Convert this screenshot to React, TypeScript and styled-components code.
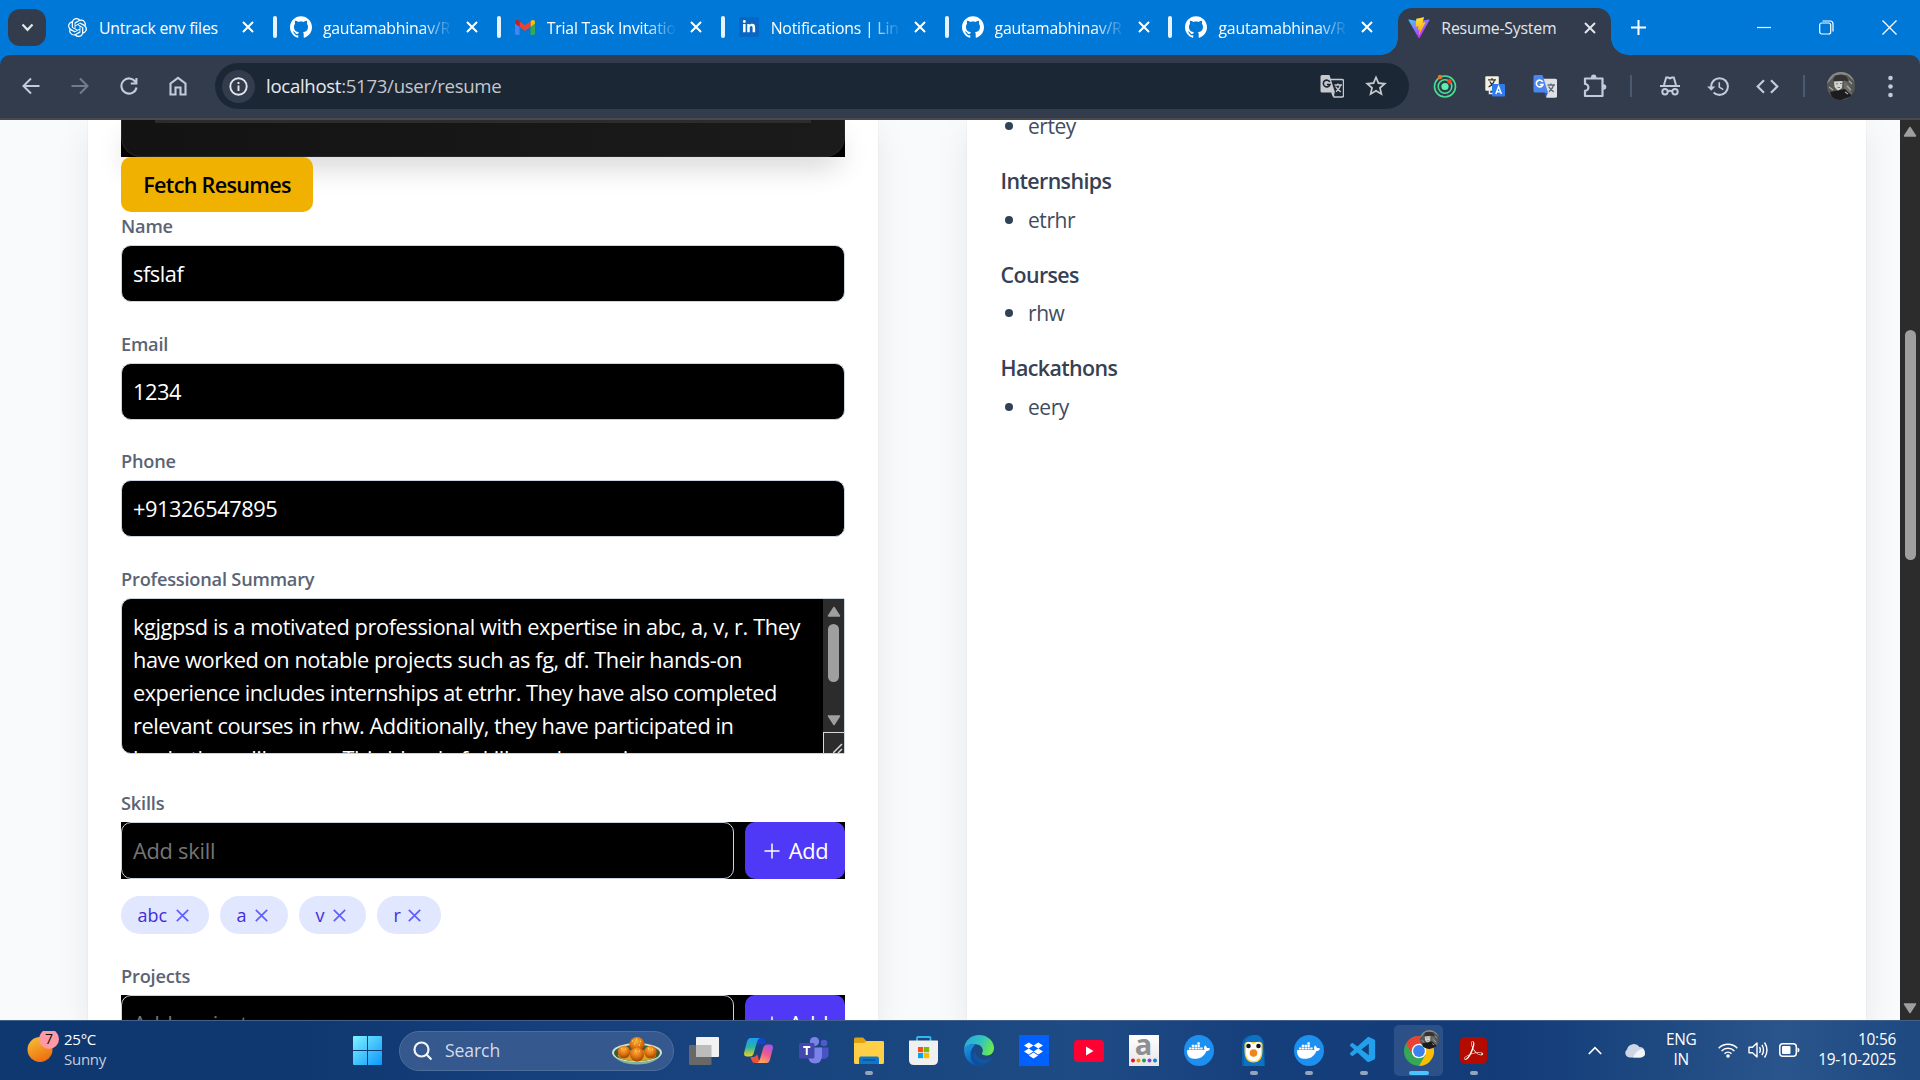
import React from "react";
import styled, { createGlobalStyle, css } from "styled-components";
import { SiOpenai, SiGithub, SiDropbox, SiDocker, SiAdobeacrobatreader } from "react-icons/si";
import { VscVscode } from "react-icons/vsc";
import { FaLinkedinIn } from "react-icons/fa";
import { MdStarBorder, MdHistory } from "react-icons/md";

const GlobalStyle = createGlobalStyle`
  * { box-sizing: border-box; }
  html, body { margin: 0; padding: 0; overflow: hidden; }
  body { font-family: "Segoe UI", "Open Sans", "Noto Sans", sans-serif; }
  svg { display: block; flex: none; }
`;

const Screen = styled.div`
  width: 1920px;
  height: 1080px;
  overflow: hidden;
  display: flex;
  flex-direction: column;
  background: #0078d7;
`;

/* ---------- Tab strip ---------- */
const TabStrip = styled.header`
  height: 55px;
  flex: none;
  display: flex;
  align-items: stretch;
  background: #0078d7;
  color: #fff;
  padding-left: 8px;
`;
const TabSearch = styled.div`
  width: 38px;
  height: 37px;
  margin: 9px 5px 0 0;
  border-radius: 12px;
  background: #323c4d;
  display: grid;
  place-items: center;
`;
const Tab = styled.div<{ $last?: boolean }>`
  width: 223.9px;
  flex: none;
  display: flex;
  align-items: center;
  padding: 0 0 1px 15px;
  position: relative;
  ${(p) =>
    !p.$last &&
    css`
      &::after {
        content: "";
        position: absolute;
        right: -2px;
        top: 16px;
        width: 4px;
        height: 22px;
        border-radius: 2px;
        background: #e9f3fc;
      }
    `}
`;
const TabIcon = styled.div`
  width: 22px;
  display: grid;
  place-items: center;
  margin-right: 11px;
`;
const TabTitle = styled.div<{ $fade?: boolean }>`
  width: 130px;
  white-space: nowrap;
  font-size: 15.8px;
  letter-spacing: -0.2px;
  line-height: 24px;
  padding-top: 1px;
  ${(p) =>
    p.$fade &&
    css`
      mask-image: linear-gradient(90deg, #000 98px, transparent 130px);
    `}
`;
const TabClose = styled.div`
  margin-left: 9px;
  width: 20px;
  display: grid;
  place-items: center;
`;
const ActiveTab = styled.div`
  width: 213px;
  margin: 8px 0 0 4px;
  flex: none;
  display: flex;
  align-items: center;
  padding: 0 0 8px 10px;
  background: #323c4d;
  border-radius: 14px 14px 0 0;
  color: #e3e6ea;
  position: relative;
  &::before,
  &::after {
    content: "";
    position: absolute;
    bottom: 0;
    width: 17px;
    height: 17px;
  }
  &::before {
    left: -17px;
    background: radial-gradient(circle at 0 0, transparent 16.5px, #323c4d 17px);
  }
  &::after {
    right: -17px;
    background: radial-gradient(circle at 100% 0, transparent 16.5px, #323c4d 17px);
  }
`;
const NewTab = styled.div`
  width: 55px;
  display: grid;
  place-items: center;
`;
const WindowButtons = styled.div`
  margin-left: auto;
  display: flex;
  align-items: center;
  padding-bottom: 1px;
  margin-right: -1px;
`;
const WindowButton = styled.div`
  width: 63px;
  display: grid;
  place-items: center;
`;

/* ---------- Toolbar ---------- */
const Toolbar = styled.div`
  height: 65px;
  flex: none;
  display: flex;
  align-items: center;
  background: #323c4d;
  border-bottom: 2px solid #47494b;
  border-radius: 10px 10px 0 0;
  color: #c2cbdc;
  padding-left: 6.5px;
  padding-bottom: 1px;
`;
const NavButton = styled.div<{ $dim?: boolean }>`
  width: 49px;
  display: grid;
  place-items: center;
  opacity: ${(p) => (p.$dim ? 0.45 : 1)};
`;
const Omnibox = styled.div`
  width: 1194px;
  height: 46px;
  margin-left: 12.5px;
  border-radius: 23px;
  background: #1c2736;
  display: flex;
  align-items: center;
  padding: 0 19px 0 7px;
`;
const SiteInfo = styled.div`
  width: 33px;
  height: 33px;
  border-radius: 50%;
  background: #323c4d;
  color: #e3e6ea;
  display: grid;
  place-items: center;
  margin-right: 11px;
`;
const Url = styled.div`
  flex: 1;
  font-size: 18.6px;
  letter-spacing: -0.3px;
  line-height: 26px;
  color: #c4c7cc;
  b {
    font-weight: 400;
    color: #e8eaed;
  }
`;
const OmniIcon = styled.div`
  width: 28px;
  margin-left: 16px;
  display: grid;
  place-items: center;
  color: #c7c9cd;
`;
const Extensions = styled.div`
  display: flex;
  align-items: center;
  margin-left: 11px;
`;
const ExtButton = styled.div<{ $w?: number }>`
  width: ${(p) => p.$w ?? 50}px;
  display: grid;
  place-items: center;
`;
const ToolbarDivider = styled.div`
  width: 2px;
  height: 22px;
  background: #4c5a70;
`;

/* ---------- Page ---------- */
const Page = styled.main`
  height: 900px;
  flex: none;
  display: flex;
  background: #f8fafc;
  overflow: hidden;
`;
const Columns = styled.div`
  flex: 1;
  display: flex;
  gap: 89px;
  padding: 0 34px 0 88px;
  overflow: hidden;
`;
const Card = styled.section<{ $w: number }>`
  width: ${(p) => p.$w}px;
  flex: none;
  background: #fff;
  padding: 0 33px;
  box-shadow: 0 0 0 1px rgba(0, 0, 0, 0.02), 0 12px 32px rgba(0, 0, 0, 0.08);
`;
const DarkBlock = styled.div`
  height: 37px;
  background: #000;
  box-shadow: 0 14px 30px -6px rgba(0, 0, 0, 0.2);
`;
const DarkPanel = styled.div`
  height: 37px;
  padding: 0 33px;
  border: 1px solid #262626;
  border-top: 0;
  border-radius: 0 0 20px 20px;
  background: linear-gradient(90deg, #131313, #1b1b1b);
`;
const DarkRule = styled.div`
  height: 3px;
  background: #2c2c2c;
`;
const FetchButton = styled.div`
  position: relative;
  width: 192px;
  height: 55px;
  border-radius: 10px;
  background: #f0b100;
  color: #000;
  font-size: 21.6px;
  font-weight: 600;
  letter-spacing: -0.7px;
  display: grid;
  place-items: center;
`;
const Field = styled.div<{ $gap: number }>`
  margin-bottom: ${(p) => p.$gap}px;
`;
const Label = styled.div<{ $first?: boolean }>`
  height: ${(p) => (p.$first ? 33 : 34)}px;
  padding-top: ${(p) => (p.$first ? 0 : 1)}px;
  font-size: 18.2px;
  letter-spacing: -0.2px;
  line-height: 28px;
  font-weight: 600;
  color: #5a6474;
`;
const fieldText = css`
  font-size: 21.8px;
  letter-spacing: -0.44px;
  color: #fff;
  white-space: nowrap;
`;
const TextInput = styled.div`
  ${fieldText}
  height: 57px;
  border: 1px solid #cad5e2;
  border-radius: 10px;
  background: #000;
  padding: 0 11px;
  display: flex;
  align-items: center;
`;
const SummaryBox = styled.div`
  height: 156px;
  border: 1px solid #cad5e2;
  border-radius: 10px 2px 2px 10px;
  background: #000;
  display: flex;
  overflow: hidden;
`;
const SummaryText = styled.div`
  ${fieldText}
  flex: 1;
  padding: 11px 0 0 11px;
  line-height: 33px;
  div:nth-child(1) {
    letter-spacing: -0.42px;
  }
  div:nth-child(3) {
    letter-spacing: -0.53px;
  }
  div:nth-child(4) {
    letter-spacing: -0.47px;
  }
`;
const SummaryScroll = styled.div`
  width: 21px;
  display: flex;
  flex-direction: column;
  background: #2c2c2c;
`;
const ScrollCell = styled.div<{ $h: number; $end?: boolean }>`
  height: ${(p) => p.$h}px;
  flex: none;
  display: flex;
  justify-content: center;
  align-items: ${(p) => (p.$end ? "flex-end" : "center")};
  padding-bottom: ${(p) => (p.$end ? 6 : 1)}px;
`;
const ScrollThumb = styled.div<{ $h: number }>`
  width: 11px;
  height: ${(p) => p.$h}px;
  flex: none;
  border-radius: 6px;
  background: #9f9f9f;
  margin: 0 auto;
`;
const Resizer = styled.div`
  height: 21px;
  flex: none;
  margin-top: auto;
  border: solid #d8d8d8;
  border-width: 1px 0 0 1px;
  display: flex;
  align-items: flex-end;
  justify-content: flex-end;
  padding: 0 1px 0 0;
`;
const AddRow = styled.div`
  height: 57px;
  display: flex;
  gap: 11px;
  background: #000;
`;
const AddInput = styled(TextInput)`
  width: 613px;
  letter-spacing: -0.25px;
  color: #757575;
`;
const AddButton = styled.div`
  width: 100px;
  border-radius: 10px;
  background: #4f39f6;
  color: #fff;
  font-size: 21.8px;
  letter-spacing: -0.4px;
  display: flex;
  align-items: center;
  justify-content: center;
  gap: 8px;
  padding-left: 1px;
`;
const Tags = styled.div`
  display: flex;
  gap: 11px;
  padding-top: 17px;
`;
const Tag = styled.div<{ $w: number }>`
  width: ${(p) => p.$w}px;
  height: 38px;
  border-radius: 19px;
  background: #e0e7ff;
  color: #432dd7;
  font-size: 18px;
  display: flex;
  align-items: center;
  justify-content: space-between;
  padding: 0 20px 0 16.5px;
`;
const Section = styled.div`
  height: 93.5px;
`;
const ScrolledSection = styled.div`
  height: 44px;
  margin-top: -11px;
  margin-bottom: 11px;
`;
const SectionTitle = styled.div`
  height: 39px;
  padding-left: 0.5px;
  font-size: 21.4px;
  line-height: 33px;
  font-weight: 600;
  letter-spacing: -0.6px;
  color: #364153;
`;
const Bullet = styled.div`
  display: flex;
  align-items: center;
  padding-left: 5px;
  gap: 15px;
  height: 33px;
  font-size: 21px;
  letter-spacing: -0.45px;
  color: #414c5e;
  &::before {
    content: "";
    width: 8px;
    height: 8px;
    border-radius: 50%;
    background: #314158;
  }
`;
const PageScroll = styled.div`
  width: 20px;
  flex: none;
  background: #2c2c2c;
  display: flex;
  flex-direction: column;
`;

/* ---------- Taskbar ---------- */
const Taskbar = styled.footer`
  height: 60px;
  flex: none;
  display: flex;
  align-items: center;
  border-top: 1px solid #43608a;
  background: linear-gradient(90deg, #103870 0%, #103870 16%, #15407c 28%, #1a4680 46%, #1f4b85 56%, #153f7b 66%, #123b78 78%, #1d4880 86%, #2a558c 93%, #1d4880 100%);
  color: #fff;
  padding-right: 24px;
`;
const Weather = styled.div`
  width: 353px;
  display: flex;
  align-items: center;
  padding-left: 27px;
  gap: 5px;
`;
const WeatherIcon = styled.div`
  width: 32px;
  height: 40px;
`;
const WeatherText = styled.div`
  font-size: 15px;
  letter-spacing: -0.25px;
  line-height: 20px;
  padding-bottom: 3px;
  div + div {
    color: #c3cede;
  }
`;
const SearchBox = styled.div`
  width: 275px;
  height: 40px;
  margin: 0 2px 0 16px;
  border-radius: 20px;
  background: #35588e;
  border: 1px solid #4d6d9d;
  display: flex;
  align-items: center;
  padding: 0 11px 0 13px;
  font-size: 17.6px;
  letter-spacing: -0.1px;
  color: #d3dcea;
`;
const SearchLabel = styled.div`
  flex: 1;
  padding: 0 0 2px 12px;
`;
const TaskItem = styled.div<{ $active?: boolean }>`
  width: 55px;
  height: 59px;
  flex: none;
  display: grid;
  place-items: center;
  position: relative;
  &::before {
    content: "";
    position: absolute;
    inset: 4px 3px;
    border-radius: 5px;
    background: ${(p) => (p.$active ? "#2c5189" : "transparent")};
  }
  > * {
    position: relative;
  }
`;
const Indicator = styled.div<{ $active?: boolean }>`
  && {
    position: absolute;
  }
  bottom: 5px;
  left: ${(p) => (p.$active ? 18 : 24)}px;
  width: ${(p) => (p.$active ? 20 : 8)}px;
  height: 4px;
  border-radius: 2px;
  background: ${(p) => (p.$active ? "#4cc2ff" : "#94a4bf")};
`;
const DockerDisc = styled.div`
  width: 30px;
  height: 31px;
  border-radius: 50%;
  background: #1d8ff0;
  display: grid;
  place-items: center;
`;
const DropboxTile = styled(DockerDisc)`
  border-radius: 0;
  background: #0061fe;
`;
const AdobeTile = styled(DockerDisc)`
  width: 27px;
  height: 27px;
  border-radius: 5px;
  background: #b30b00;
`;
const AmazonTile = styled.div`
  width: 30px;
  height: 31px;
  background: linear-gradient(#fff, #e6e6e6);
  display: flex;
  flex-direction: column;
  align-items: center;
  color: #8f8f8f;
  font: 700 29px/17px "Open Sans", sans-serif;
  svg {
    margin-top: 6px;
  }
`;
const LinkedinTile = styled.div`
  width: 20px;
  height: 20px;
  border-radius: 2px;
  background: #0a66c2;
  display: grid;
  place-items: center;
`;
const Tray = styled.div`
  margin-left: auto;
  display: flex;
  align-items: center;
  font-size: 15.4px;
  letter-spacing: -0.25px;
  line-height: 20px;
  padding-bottom: 1px;
`;
const Lang = styled.div`
  width: 60px;
  text-align: center;
  margin: 0 7px 0 6px;
`;
const Clock = styled.div`
  text-align: right;
  margin-left: 18px;
`;
const TrayIcons = styled.div`
  display: flex;
  align-items: center;
  gap: 10px;
`;

/* ---------- Icons ---------- */
const CloseIcon = ({ color = "#fff" }: { color?: string }) => (
  <svg width="12" height="12" viewBox="0 0 12 12">
    <path d="M1 1L11 11M11 1L1 11" stroke={color} strokeWidth="2" />
  </svg>
);
const TagRemoveIcon = () => (
  <svg width="13" height="13" viewBox="0 0 13 13">
    <path d="M.8 .8L12.200 12.200M12.200 .8L.8 12.200" stroke="#615fff" strokeWidth="1.700" />
  </svg>
);
const GmailIcon = () => (
  <svg width="20" height="15" viewBox="0 0 20 15">
    <path d="M0 3V13.6Q0 15 1.4 15H4.5V6z" fill="#4285f4" />
    <path d="M20 3V13.6Q20 15 18.6 15H15.5V6z" fill="#34a853" />
    <path d="M15.5 1.4V7L20 3.6V2C20 0 17.8-.6 16.3.6z" fill="#fbbc04" />
    <path d="M4.5 7V1.2L10 5.3l5.5-4.1V7L10 11z" fill="#ea4335" />
    <path d="M0 2v1.6L4.5 7V1.2L3.7.6C2.200-.6 0 0 0 2z" fill="#c5221f" />
  </svg>
);
const ViteIcon = () => (
  <svg width="22" height="22" viewBox="0 0 410 404">
    <defs>
      <linearGradient id="va" x1="6" y1="33" x2="235" y2="344" gradientUnits="userSpaceOnUse">
        <stop stopColor="#41d1ff" />
        <stop offset="1" stopColor="#bd34fe" />
      </linearGradient>
      <linearGradient id="vb" x1="194" y1="9" x2="236" y2="293" gradientUnits="userSpaceOnUse">
        <stop stopColor="#ffea83" />
        <stop offset=".08" stopColor="#ffdd35" />
        <stop offset="1" stopColor="#ffa800" />
      </linearGradient>
    </defs>
    <path d="M399.641 59.525l-183.998 329.020c-3.799 6.793-13.559 6.833-17.415.073L10.582 59.556C6.380 52.190 12.680 43.267 21.028 44.759l184.195 32.923c1.175.21 2.378.208 3.553-.006l180.343-32.870c8.320-1.517 14.649 7.337 10.522 14.719z" fill="url(#va)" />
    <path d="M292.965 1.574L156.801 28.255c-2.238.439-3.910 2.332-4.044 4.608l-8.376 141.464c-.197 3.332 2.863 5.918 6.115 5.168l37.910-8.749c3.547-.818 6.752 2.306 6.023 5.873l-11.263 55.153c-.758 3.712 2.727 6.886 6.352 5.785l23.415-7.114c3.630-1.102 7.118 2.081 6.350 5.796l-17.899 86.633c-1.120 5.419 6.088 8.374 9.094 3.728l2.008-3.103L323.440 102.074c1.858-3.707-1.346-7.935-5.418-7.150l-39.022 7.532c-3.667.707-6.787-2.708-5.752-6.296l25.469-88.291c1.036-3.594-2.094-7.012-5.752-6.295z" fill="url(#vb)" />
  </svg>
);
const TranslateGlyph = ({ back, front, ink, tip }: { back: string; front: string; ink: string; tip: string }) => (
  <svg width="24" height="24" viewBox="0 0 24 24">
    <path d="M9 5.500H22a1.500 1.500 0 0 1 1.500 1.500V21.500a1.500 1.500 0 0 1-1.500 1.500H14z" fill={front} stroke={front === "#1c2736" ? back : front} strokeWidth="1.400" />
    <path d="M2 1h7.500l5.500 17.500H2A1.500 1.500 0 0 1 .5 17V2.500A1.500 1.500 0 0 1 2 1z" fill={back} />
    <path d="M11 18.500h4l-2 4.500z" fill={tip} />
    <path d="M9.800 8A3.400 3.400 0 1 0 10 10.500H6.800" fill="none" stroke={front === "#1c2736" ? "#1c2736" : "#fff"} strokeWidth="1.600" />
    <path d="M14.500 11h7.500M18 9.500V11M20.500 11.300c-.8 3-2.500 5-4.500 6.500M15.600 12.500c1.200 2.200 3 4 5.200 5.400" fill="none" stroke={ink} strokeWidth="1.400" />
  </svg>
);
const TranslateTiles = () => (
  <svg width="20" height="21" viewBox="0 0 20 21">
    <rect x=".3" y=".3" width="13.500" height="14.500" rx="1" fill="#f5f0e0" />
    <path d="M3 3.800h8M7 2v1.800M9.500 4c-.8 3-3 5.500-6 7M4.800 5.500c1 2.500 2.800 4 5.200 5" fill="none" stroke="#333" strokeWidth="1.200" />
    <rect x="7" y="8" width="13" height="12.500" rx="1" fill="#2f7bf0" />
    <path d="M10.800 18l2.800-7.500 2.800 7.500M11.700 15.700h3.800" fill="none" stroke="#fff" strokeWidth="1.400" />
    <path d="M4.500 13.500v4h3" fill="none" stroke="#e8eefc" strokeWidth="1.500" />
  </svg>
);
const TargetIcon = () => (
  <svg width="24" height="24" viewBox="0 0 24 24" fill="none" stroke="#4ade94" strokeWidth="1.600">
    <circle cx="12" cy="12.500" r="10.500" />
    <circle cx="12" cy="12.500" r="6.800" />
    <circle cx="12" cy="12.500" r="3.600" fill="#5cf0a8" stroke="none" />
    <circle cx="7" cy="3" r="2.200" fill="#f97316" stroke="none" />
    <circle cx="16.500" cy="7.500" r="2.200" fill="#ef4423" stroke="none" />
  </svg>
);
const PuzzleIcon = () => (
  <svg width="24" height="24" viewBox="0 0 24 24" fill="none" stroke="currentColor" strokeWidth="2.200" strokeLinejoin="round">
    <path d="M2 4.500H19.500V22H2V16.800a3.400 3.400 0 0 0 0-6.800z" />
    <path d="M8 4.500V3.300a2.700 2.700 0 0 1 5.400 0V4.500zM20 10.300h.6a2.700 2.700 0 0 1 0 5.400H20z" fill="currentColor" stroke="none" />
  </svg>
);
const IncognitoIcon = () => (
  <svg width="22" height="22" viewBox="0 0 22 22" fill="none" stroke="currentColor" strokeWidth="2">
    <path d="M5 10L7.200 2.500H9L11 3.300L13 2.500H14.800L17 10M1 11H21" />
    <circle cx="6" cy="16.800" r="2.700" />
    <circle cx="16" cy="16.800" r="2.700" />
    <path d="M8.700 16.300Q11 15 13.300 16.300" />
  </svg>
);
const Portrait = ({ size }: { size: number }) => (
  <svg width={size} height={size} viewBox="0 0 28 28">
    <defs>
      <clipPath id={`pc${size}`}>
        <circle cx="14" cy="14" r="14" />
      </clipPath>
    </defs>
    <g clipPath={`url(#pc${size})`}>
      <rect width="28" height="28" fill="#565654" />
      <path d="M0 0h28v10L20 3 8 3 0 12z" fill="#8a8a85" />
      <path d="M6 9Q7 2 14 2.500T21 9L18 9 9 9.500z" fill="#333" />
      <path d="M7 9.500L15.500 9 15 16 11 19 7.500 15z" fill="#d2d2ce" />
      <path d="M9 11.800h2M13 11.500h2M10.500 15.500h2.500" stroke="#777" strokeWidth="1" />
      <path d="M17 8l5 5 3 9-8-4z" fill="#6c6c6a" />
      <path d="M3 20L11 18.500 18 17 25 24 14 28H6z" fill="#1c1c1c" />
      <path d="M20 14l4 4M2 15l4 3M22 9l3 3M18 20l3 2" stroke="#a8a8a3" strokeWidth="1.300" />
    </g>
  </svg>
);
const ArrowTri = ({ down }: { down?: boolean }) => (
  <svg width="14" height="11" viewBox="0 0 14 11">
    <path d={down ? "M1.500 1H12.500L7 9.500z" : "M7 1.500L12.500 10H1.500z"} fill="#9f9f9f" stroke="#9f9f9f" strokeWidth="1.500" strokeLinejoin="round" />
  </svg>
);
const StartIcon = () => (
  <svg width="30" height="30" viewBox="0 0 30 30">
    <defs>
      <linearGradient id="win" x1="0" y1="0" x2="1" y2="1" gradientUnits="objectBoundingBox">
        <stop stopColor="#7df3ff" />
        <stop offset="1" stopColor="#0c97fb" />
      </linearGradient>
    </defs>
    <path d="M1 0H14V14H0V1Q0 0 1 0zM15 0H28Q29 0 29 1V14H15zM0 15H14V29H1Q0 29 0 28zM15 15H29V28Q29 29 28 29H15z" fill="url(#win)" />
  </svg>
);
const SweetsIcon = () => (
  <svg width="50" height="28" viewBox="0 0 50 28">
    <defs>
      <radialGradient id="ball" cx=".45" cy=".3" r=".75">
        <stop stopColor="#ffb13d" />
        <stop offset=".55" stopColor="#dd6f10" />
        <stop offset="1" stopColor="#8f3a05" />
      </radialGradient>
    </defs>
    <path d="M0 15.500C2 23 12 27.500 25 27.500S48 23 50 15.500z" fill="#7fb59a" />
    <ellipse cx="25" cy="15.500" rx="25" ry="9.500" fill="#cfe3cf" />
    <ellipse cx="25" cy="16" rx="23" ry="8.200" fill="#3d5a3a" />
    <ellipse cx="25" cy="18.500" rx="19" ry="5.500" fill="#d9a21c" />
    <circle cx="12" cy="15" r="6.300" fill="url(#ball)" />
    <circle cx="38.500" cy="15" r="6.300" fill="url(#ball)" />
    <circle cx="25" cy="7.500" r="7.500" fill="url(#ball)" />
    <circle cx="25" cy="17.500" r="7" fill="url(#ball)" />
    <path d="M20 4h1M24 2.500h1M28 4.500h1M22 7h1M27 8h1M9 11.500h1M13 12h1M36 11.500h1M40 12.500h1M23 13.500h1M27 14h1" stroke="#e6e04a" strokeWidth="1.300" />
  </svg>
);
const TaskViewIcon = () => (
  <svg width="30" height="28" viewBox="0 0 30 28">
    <rect x="0" y="8" width="22.500" height="20" rx="1" fill="#686868" />
    <rect x="7" y="0" width="23" height="20" rx="1" fill="#f2f2f2" />
    <path d="M7 8H22.500V20H7z" fill="#bcbcbc" />
  </svg>
);
const CopilotIcon = () => (
  <svg width="29" height="27" viewBox="0 0 29 27">
    <defs>
      <linearGradient id="cpa" x1="0" y1="0" x2="0" y2="1">
        <stop stopColor="#1a9df0" />
        <stop offset=".5" stopColor="#2db5a5" />
        <stop offset="1" stopColor="#f2d21b" />
      </linearGradient>
      <linearGradient id="cpb" x1=".7" y1="0" x2=".3" y2="1">
        <stop stopColor="#a855e8" />
        <stop offset=".5" stopColor="#f05a8c" />
        <stop offset="1" stopColor="#ffa95a" />
      </linearGradient>
    </defs>
    <path d="M13 1H18Q20.500 1 21.300 3.500L22.500 7H17Q14 7 13 10z" fill="#1743c8" />
    <path d="M6.500 1H16Q14 1.500 13 5L9.500 17Q8.500 19.500 6 19.500H3Q-.8 19.500.3 15L3 4.500Q4 1 6.500 1z" fill="url(#cpa)" />
    <path d="M16 26H11Q8.500 26 7.700 23.500L6.500 20H9Q12 20 13 17z" fill="#f0503a" />
    <path d="M22.500 26H13Q15 25.500 16 22L19.500 10Q20.500 7.500 23 7.500H26Q29.800 7.500 28.700 12L26 22.500Q25 26 22.500 26z" fill="url(#cpb)" />
  </svg>
);
const TeamsIcon = () => (
  <svg width="30" height="27" viewBox="0 0 30 27">
    <circle cx="25" cy="6" r="3.300" fill="#5059c9" />
    <path d="M20 10.500H29.500V18Q29 22 24 22L20 20z" fill="#4a53c4" />
    <circle cx="15.500" cy="4.600" r="4.600" fill="#7b83eb" />
    <path d="M9 10.500H23V19Q22.500 26.500 16 26.500T9 19z" fill="#7b83eb" />
    <rect x="0" y="6" width="15.500" height="15.500" rx="1.500" fill="#4348ae" />
    <path d="M4.200 10H11.300M7.750 10V18" stroke="#fff" strokeWidth="2" />
  </svg>
);
const FolderIcon = () => (
  <svg width="30" height="27" viewBox="0 0 30 27">
    <path d="M0 2Q0 .5 1.500.5H9L12.500 4H28.500Q30 4 30 5.500V14H0z" fill="#e0a010" />
    <path d="M0 6H10L13 4H28.500Q30 4 30 5.500V25.500Q30 27 28.500 27H1.500Q0 27 0 25.500z" fill="#ffcf48" />
    <path d="M5 27V21.500Q5 19.500 7 19.500H23Q25 19.500 25 21.500V27z" fill="#0f76cc" />
    <path d="M8.500 23H21.500" stroke="#0a4f94" strokeWidth="1.300" />
  </svg>
);
const StoreIcon = () => (
  <svg width="29" height="29" viewBox="0 0 29 29">
    <path d="M8 6V2Q8 1 9 1H20.500Q21.500 1 21.500 2V6" fill="none" stroke="#2fb9ee" strokeWidth="1.800" />
    <path d="M0 5Q0 4.500.5 4.500H28.500Q29 4.500 29 5V24Q29 29 24 29H5Q0 29 0 24z" fill="#f0f0f0" />
    <path d="M9 11h5.200v5.200H9z" fill="#f25022" />
    <path d="M15 11h5.200v5.200H15z" fill="#7fba00" />
    <path d="M9 17h5.200v5.200H9z" fill="#00a4ef" />
    <path d="M15 17h5.200v5.200H15z" fill="#ffb900" />
  </svg>
);
const EdgeIcon = () => (
  <svg width="30" height="31" viewBox="0 0 30 31">
    <defs>
      <linearGradient id="ea" x1="0" y1=".2" x2="1" y2=".5">
        <stop stopColor="#2aa8e0" />
        <stop offset=".55" stopColor="#30c4c0" />
        <stop offset="1" stopColor="#6bea4c" />
      </linearGradient>
      <linearGradient id="eb" x1="0" y1="0" x2=".5" y2="1">
        <stop stopColor="#1d9be0" />
        <stop offset="1" stopColor="#0a5cb8" />
      </linearGradient>
    </defs>
    <path d="M0 14C1 5 7 0 15 0C24 0 30 6.500 30 13C30 18 26.500 20.500 22.500 20.500C19 20.500 17.500 19.300 18 18C19.500 16.500 19.300 12 15 10C9 7.500 2 10 0 14z" fill="url(#ea)" />
    <path d="M0 14.500C1.500 9.500 7 8.500 11.500 9.500C8 12 7 16 8.500 20.500C10.500 26 16 28.500 20 30C10 33 0 26 0 14.500z" fill="url(#eb)" />
    <path d="M11.500 10.500C8.500 14 8.500 20 13 24.500C17 28.500 21.500 28.500 27.500 24C25 28 21 31 16 31C10 30 6.500 26 6.500 20C6.500 15.500 8.500 12 11.500 10.500z" fill="#0d4f9e" />
    <path d="M12 17C11.500 23 18 27 27 23C28 22.700 28.200 23.500 27.500 24.300C22 30.500 13 29.500 10 23C9 20 10 17.500 12 17z" fill="#14559e" />
  </svg>
);
const YoutubeIcon = () => (
  <svg width="30" height="22" viewBox="0 0 30 22">
    <rect width="30" height="22" rx="4" fill="#ff0033" />
    <path d="M12 6.500L19.500 11 12 15.500z" fill="#fff" />
  </svg>
);
const AmazonDots = () => (
  <svg width="26" height="5" viewBox="0 0 26 5">
    <circle cx="2" cy="2.500" r="2" fill="#e8112d" />
    <circle cx="7.500" cy="2.500" r="2" fill="#f29100" />
    <circle cx="13" cy="2.500" r="2" fill="#12a05c" />
    <circle cx="18.500" cy="2.500" r="2" fill="#8a3fd1" />
    <circle cx="24" cy="2.500" r="2" fill="#0a84d6" />
  </svg>
);
const PenguinIcon = () => (
  <svg width="23" height="31" viewBox="0 0 23 31">
    <path d="M0 31V10Q1 0 11.500 0T22 10L23 31z" fill="#0a62ae" />
    <path d="M2 31V10Q3 2 11.500 0T21 10L22 31z" fill="#0b72c4" />
    <path d="M2.500 14V9Q4 6 7.500 7H15.500Q19 6 20.500 9V14Q21 27.500 11.500 27.500T2.500 14z" fill="#ffd23c" />
    <path d="M4 13V9Q5 6.500 8 7L11.500 9 15 7Q18 6.500 19 9V13Q20 26 11.500 26T4 13z" fill="#fff" />
    <circle cx="6.500" cy="11" r="2.300" fill="#161616" />
    <circle cx="16.500" cy="11" r="2.300" fill="#161616" />
    <circle cx="11.500" cy="18" r="3.800" fill="#f0871a" />
  </svg>
);
const ChromeIcon = () => (
  <svg width="30" height="30" viewBox="0 0 30 30">
    <circle cx="15" cy="15" r="15" fill="#34a853" />
    <path d="M2 7.500A15 15 0 0 1 28 7.500H15L8.500 18.700z" fill="#ea4335" />
    <path d="M28 7.500A15 15 0 0 1 15 30L21.500 18.700 15 7.500z" fill="#fbbc04" />
    <circle cx="15" cy="15" r="7.300" fill="#fff" />
    <circle cx="15" cy="15" r="5.900" fill="#3b82f0" />
  </svg>
);
const ChromeWrap = styled.div`
  padding-top: 1px;
`;
const ChromeBadge = styled.div`
  position: absolute;
  left: 16px;
  top: -5px;
`;

const githubTab = { icon: <SiGithub size={22} />, fade: true, title: "gautamabhinav/R" };
const tabs = [
  { icon: <SiOpenai size={19} />, title: "Untrack env files", fade: false },
  githubTab,
  { icon: <GmailIcon />, title: "Trial Task Invitatio", fade: true },
  { icon: <LinkedinTile><FaLinkedinIn size={14} /></LinkedinTile>, title: "Notifications | Lin", fade: true },
  githubTab,
  githubTab,
];

const fields = [
  { label: "Name", value: "sfslaf", gap: 27 },
  { label: "Email", value: "1234", gap: 26 },
  { label: "Phone", value: "+91326547895", gap: 27 },
];
const summary = [
  "kgjgpsd is a motivated professional with expertise in abc, a, v, r. They",
  "have worked on notable projects such as fg, df. Their hands-on",
  "experience includes internships at etrhr. They have also completed",
  "relevant courses in rhw. Additionally, they have participated in",
  "hackathons like eery. This blend of skills and experience",
];
const skills = [
  { name: "abc", w: 88 },
  { name: "a", w: 68 },
  { name: "v", w: 67 },
  { name: "r", w: 64 },
];
const sections = [
  { title: "Internships", item: "etrhr" },
  { title: "Courses", item: "rhw" },
  { title: "Hackathons", item: "eery" },
];

const AddBar = ({ placeholder }: { placeholder: string }) => (
  <AddRow>
    <AddInput>{placeholder}</AddInput>
    <AddButton>
      <svg width="18" height="18" viewBox="0 0 18 18">
        <path d="M9 1.500V16.500M1.500 9H16.500" stroke="#fff" strokeWidth="1.500" />
      </svg>
      Add
    </AddButton>
  </AddRow>
);

const Browser = () => (
  <>
    <TabStrip>
      <TabSearch>
        <svg width="13" height="9" viewBox="0 0 13 9">
          <path d="M1.500 1.500L6.500 6.800L11.500 1.500" fill="none" stroke="#e3e6ea" strokeWidth="2.200" />
        </svg>
      </TabSearch>
      {tabs.map((t, i) => (
        <Tab key={i} $last={i === tabs.length - 1}>
          <TabIcon>{t.icon}</TabIcon>
          <TabTitle $fade={t.fade}>{t.title}</TabTitle>
          <TabClose><CloseIcon /></TabClose>
        </Tab>
      ))}
      <ActiveTab>
        <TabIcon><ViteIcon /></TabIcon>
        <TabTitle>Resume-System</TabTitle>
        <TabClose><CloseIcon color="#e3e6ea" /></TabClose>
      </ActiveTab>
      <NewTab>
        <svg width="15" height="15" viewBox="0 0 15 15">
          <path d="M7.500 0V15M0 7.500H15" stroke="#fff" strokeWidth="2" />
        </svg>
      </NewTab>
      <WindowButtons>
        <WindowButton>
          <svg width="14" height="3" viewBox="0 0 14 3"><path d="M0 1.500H14" stroke="#fff" strokeWidth="1.200" /></svg>
        </WindowButton>
        <WindowButton>
          <svg width="15" height="15" viewBox="0 0 15 15" fill="none" stroke="#fff" strokeWidth="1.200">
            <rect x=".7" y="3" width="11" height="11" rx="2" />
            <path d="M3.500 1H11Q14 1 14 4V11.500" />
          </svg>
        </WindowButton>
        <WindowButton>
          <svg width="15" height="15" viewBox="0 0 15 15"><path d="M.5.5L14.500 14.500M14.500.5L.5 14.500" stroke="#fff" strokeWidth="1.300" /></svg>
        </WindowButton>
      </WindowButtons>
    </TabStrip>
    <Toolbar>
      <NavButton>
        <svg width="18" height="18" viewBox="0 0 18 18" fill="none" stroke="currentColor" strokeWidth="2"><path d="M17.500 9H2M9 1.500L1.500 9L9 16.500" /></svg>
      </NavButton>
      <NavButton $dim>
        <svg width="18" height="18" viewBox="0 0 18 18" fill="none" stroke="currentColor" strokeWidth="2"><path d="M.5 9H16M9 1.500L16.500 9L9 16.500" /></svg>
      </NavButton>
      <NavButton>
        <svg width="18" height="18" viewBox="0 0 18 18" fill="none" stroke="currentColor" strokeWidth="2.100"><path d="M15.500 5A7.600 7.600 0 1 0 16.500 10.500M16.400 1V6.500H10.800" /></svg>
      </NavButton>
      <NavButton>
        <svg width="18" height="20" viewBox="0 0 18 20" fill="none" stroke="currentColor" strokeWidth="2.100"><path d="M1.500 7.500L9 1.800L16.500 7.500V18.500H11.500V11.500H6.500V18.500H1.500z" /></svg>
      </NavButton>
      <Omnibox>
        <SiteInfo>
          <svg width="19" height="19" viewBox="0 0 19 19" fill="none" stroke="currentColor" strokeWidth="1.900"><circle cx="9.500" cy="9.500" r="8.200" /><path d="M9.500 8.500V14M9.500 5V7" /></svg>
        </SiteInfo>
        <Url><b>localhost</b>:5173/user/resume</Url>
        <OmniIcon><TranslateGlyph back="#c7c9cd" front="#1c2736" ink="#c7c9cd" tip="#c7c9cd" /></OmniIcon>
        <OmniIcon><MdStarBorder size={26} /></OmniIcon>
      </Omnibox>
      <Extensions>
        <ExtButton><TargetIcon /></ExtButton>
        <ExtButton><TranslateTiles /></ExtButton>
        <ExtButton $w={49}><TranslateGlyph back="#4a86ee" front="#dfe1e5" ink="#5f6b7a" tip="#2a4fd0" /></ExtButton>
        <ExtButton $w={51}><PuzzleIcon /></ExtButton>
        <ExtButton $w={21}><ToolbarDivider /></ExtButton>
        <ExtButton $w={57}><IncognitoIcon /></ExtButton>
        <ExtButton $w={41}><MdHistory size={25} /></ExtButton>
        <ExtButton $w={57}>
          <svg width="23" height="15" viewBox="0 0 23 15" fill="none" stroke="currentColor" strokeWidth="2.200"><path d="M8 1.200L1.700 7.500L8 13.800M15 1.200L21.300 7.500L15 13.800" /></svg>
        </ExtButton>
        <ExtButton $w={16}><ToolbarDivider /></ExtButton>
        <ExtButton $w={57}><Portrait size={28} /></ExtButton>
        <ExtButton $w={43}>
          <svg width="5" height="23" viewBox="0 0 5 23" fill="currentColor"><circle cx="2.500" cy="3" r="2.300" /><circle cx="2.500" cy="11.500" r="2.300" /><circle cx="2.500" cy="20" r="2.300" /></svg>
        </ExtButton>
      </Extensions>
    </Toolbar>
  </>
);

const Task = ({ children, dot, active }: { children: React.ReactNode; dot?: boolean; active?: boolean }) => (
  <TaskItem $active={active}>
    {children}
    {(dot || active) && <Indicator $active={active} />}
  </TaskItem>
);

export default function App() {
  return (
    <>
      <GlobalStyle />
      <Screen>
        <Browser />
        <Page>
          <Columns>
            <Card $w={790}>
              <DarkBlock>
                <DarkPanel><DarkRule /></DarkPanel>
              </DarkBlock>
              <FetchButton>Fetch Resumes</FetchButton>
              {fields.map((f, i) => (
                <Field key={f.label} $gap={f.gap}>
                  <Label $first={i === 0}>{f.label}</Label>
                  <TextInput>{f.value}</TextInput>
                </Field>
              ))}
              <Field $gap={34}>
                <Label>Professional Summary</Label>
                <SummaryBox>
                  <SummaryText>
                    {summary.map((line) => <div key={line}>{line}</div>)}
                  </SummaryText>
                  <SummaryScroll>
                    <ScrollCell $h={25}><ArrowTri /></ScrollCell>
                    <ScrollThumb $h={58} />
                    <ScrollCell $h={50} $end><ArrowTri down /></ScrollCell>
                    <Resizer>
                      <svg width="10" height="10" viewBox="0 0 10 10"><path d="M0 10L9 1M5 10L9 6" stroke="#d8d8d8" strokeWidth="1.500" /></svg>
                    </Resizer>
                  </SummaryScroll>
                </SummaryBox>
              </Field>
              <Field $gap={27}>
                <Label>Skills</Label>
                <AddBar placeholder="Add skill" />
                <Tags>
                  {skills.map((s) => (
                    <Tag key={s.name} $w={s.w}>
                      {s.name}
                      <TagRemoveIcon />
                    </Tag>
                  ))}
                </Tags>
              </Field>
              <Field $gap={0}>
                <Label>Projects</Label>
                <AddBar placeholder="Add project" />
              </Field>
            </Card>
            <Card $w={899}>
              <ScrolledSection>
                <Bullet>ertey</Bullet>
              </ScrolledSection>
              {sections.map((s) => (
                <Section key={s.title}>
                  <SectionTitle>{s.title}</SectionTitle>
                  <Bullet>{s.item}</Bullet>
                </Section>
              ))}
            </Card>
          </Columns>
          <PageScroll>
            <ScrollCell $h={23}><ArrowTri /></ScrollCell>
            <ScrollCell $h={187} />
            <ScrollThumb $h={230} />
            <ScrollCell $h={438} />
            <ScrollCell $h={22}><ArrowTri down /></ScrollCell>
          </PageScroll>
        </Page>
        <Taskbar>
          <Weather>
            <WeatherIcon>
              <svg width="32" height="36" viewBox="0 0 32 36">
                <defs>
                  <linearGradient id="sun" x1=".2" y1="0" x2=".7" y2="1">
                    <stop stopColor="#f5bd36" />
                    <stop offset="1" stopColor="#ee6a0c" />
                  </linearGradient>
                </defs>
                <circle cx="13" cy="18.500" r="12.500" fill="url(#sun)" />
                <circle cx="22" cy="10" r="10" fill="#ff99a4" transform="translate(0 -2)" />
                <text x="22" y="13" textAnchor="middle" fontFamily="Open Sans" fontSize="14" fill="#111">7</text>
              </svg>
            </WeatherIcon>
            <WeatherText><div>25°C</div><div>Sunny</div></WeatherText>
          </Weather>
          <StartIcon />
          <SearchBox>
            <svg width="20" height="20" viewBox="0 0 20 20" fill="none" stroke="#f1f4f8" strokeWidth="2.200"><circle cx="8.500" cy="8.500" r="7" /><path d="M13.500 13.500L18.500 18.500" /></svg>
            <SearchLabel>Search</SearchLabel>
            <SweetsIcon />
          </SearchBox>
          <Task><TaskViewIcon /></Task>
          <Task><CopilotIcon /></Task>
          <Task><TeamsIcon /></Task>
          <Task dot><FolderIcon /></Task>
          <Task><StoreIcon /></Task>
          <Task><EdgeIcon /></Task>
          <Task><DropboxTile><SiDropbox size={19} /></DropboxTile></Task>
          <Task><YoutubeIcon /></Task>
          <Task><AmazonTile>a<AmazonDots /></AmazonTile></Task>
          <Task><DockerDisc><SiDocker size={23} /></DockerDisc></Task>
          <Task dot><PenguinIcon /></Task>
          <Task dot><DockerDisc><SiDocker size={23} /></DockerDisc></Task>
          <Task dot><VscVscode size={31} color="#23a0ec" /></Task>
          <Task active>
            <ChromeWrap>
              <ChromeIcon />
              <ChromeBadge><Portrait size={19} /></ChromeBadge>
            </ChromeWrap>
          </Task>
          <Task dot><AdobeTile><SiAdobeacrobatreader size={19} /></AdobeTile></Task>
          <Tray>
            <svg width="14" height="9" viewBox="0 0 14 9"><path d="M.8 8L7 1.700L13.200 8" fill="none" stroke="#fff" strokeWidth="1.700" /></svg>
            <svg width="43" height="15" viewBox="-23 0 43 15">
              <path d="M4.500 14.500A4.500 4.500 0 0 1 2 6.500A7 7 0 0 1 14.500 4A5.300 5.300 0 0 1 15.500 14.500z" fill="#cdd6e6" />
              <path d="M8 14.500Q12 6 18 6Q21 9 19.500 12.500Q18 14.500 15.500 14.500z" fill="#f2f5fa" />
            </svg>
            <Lang><div>ENG</div><div>IN</div></Lang>
            <TrayIcons>
              <svg width="20" height="16" viewBox="0 0 20 16" fill="none" stroke="#fff" strokeWidth="1.500">
                <path d="M.7 6.200A13 13 0 0 1 19.300 6.200M3.600 9A9 9 0 0 1 16.400 9M6.500 11.700A5 5 0 0 1 13.500 11.700" />
                <circle cx="10" cy="14" r="1.800" fill="#fff" stroke="none" />
              </svg>
              <svg width="21" height="18" viewBox="0 0 21 18" fill="none" stroke="#fff" strokeWidth="1.400">
                <path d="M1 6.300H4.500L9 2V16L4.500 11.700H1z" strokeLinejoin="round" />
                <path d="M11.500 6.200Q13.200 9 11.500 11.800M14 3.800Q17 9 14 14.200M16.500 1.500Q21.500 9 16.500 16.500" />
              </svg>
              <svg width="21" height="14" viewBox="0 0 21 14">
                <rect x=".8" y=".8" width="16.500" height="12.400" rx="3" fill="none" stroke="#fff" strokeWidth="1.500" />
                <rect x="3" y="3" width="8.500" height="8" rx="1" fill="#fff" />
                <path d="M18.500 4.500Q20.500 5 20.500 7T18.500 9.500z" fill="#fff" />
              </svg>
            </TrayIcons>
            <Clock><div>10:56</div><div>19-10-2025</div></Clock>
          </Tray>
        </Taskbar>
      </Screen>
    </>
  );
}
